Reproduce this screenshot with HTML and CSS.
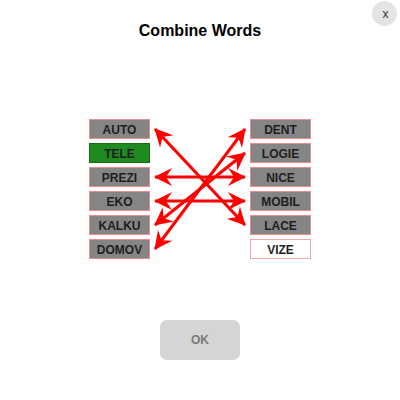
FILE: index.html
```html
<!DOCTYPE html>
<html>
<head>
<meta charset="utf-8">
<link rel="stylesheet" href="styles.css">
</head>
<body>
<div class="app">
  <header class="header">
    <h1 class="title">Combine Words</h1>
    <button class="close">x</button>
  </header>
  <div class="board">
    <div class="col">
      <div class="word">AUTO</div>
      <div class="word selected">TELE</div>
      <div class="word">PREZI</div>
      <div class="word">EKO</div>
      <div class="word">KALKU</div>
      <div class="word">DOMOV</div>
    </div>
    <svg class="links" width="100" height="140" viewBox="0 0 100 140">
      <defs>
        <marker id="ah" markerUnits="userSpaceOnUse" markerWidth="24" markerHeight="24" refX="0" refY="0" viewBox="-20 -12 24 24" orient="auto-start-reverse">
          <path d="M1,0 L-17,-9 L-11,0 L-17,9 Z" fill="#ff0000"/>
        </marker>
      </defs>
      <g stroke="#ff0000" stroke-width="3" marker-start="url(#ah)" marker-end="url(#ah)">
        <line x1="5" y1="10" x2="95" y2="106"/>
        <line x1="5" y1="58" x2="95" y2="58"/>
        <line x1="5" y1="82" x2="95" y2="82"/>
        <line x1="5" y1="106" x2="95" y2="34"/>
        <line x1="5" y1="130" x2="95" y2="10"/>
      </g>
    </svg>
    <div class="col">
      <div class="word">DENT</div>
      <div class="word">LOGIE</div>
      <div class="word">NICE</div>
      <div class="word">MOBIL</div>
      <div class="word">LACE</div>
      <div class="word empty">VIZE</div>
    </div>
  </div>
  <button class="ok">OK</button>
</div>
</body>
</html>
```
FILE: styles.css
```css
html, body {
  margin: 0;
  padding: 0;
  background: #ffffff;
}
body {
  font-family: "Liberation Sans", Arial, sans-serif;
}
.app {
  width: 400px;
  height: 400px;
  display: flex;
  flex-direction: column;
  align-items: center;
}
.header {
  width: 400px;
  display: grid;
  grid-template-columns: 1fr auto 1fr;
  align-items: start;
}
.title {
  grid-column: 2;
  margin: 22px 0 0 0;
  font-size: 16px;
  line-height: 18px;
  font-weight: bold;
  color: #000;
}
.close {
  grid-column: 3;
  justify-self: end;
  margin: 1px 3px 0 0;
  width: 25px;
  height: 25px;
  border-radius: 50%;
  border: none;
  background: #e4e4e4;
  color: #333;
  font-family: "Liberation Sans", Arial, sans-serif;
  font-size: 12px;
  line-height: 25px;
  padding: 2px 0 0 2px;
  display: flex;
  align-items: center;
  justify-content: center;
}
.board {
  margin-top: 79px;
  display: flex;
  flex-direction: row;
}
.col {
  display: flex;
  flex-direction: column;
  gap: 4px;
}
.links {
  display: block;
  overflow: visible;
}
.word {
  box-sizing: border-box;
  width: 61px;
  height: 20px;
  border: 1px solid #f08c8c;
  background: #858585;
  color: #1e1e1e;
  font-size: 12px;
  font-weight: bold;
  display: flex;
  align-items: center;
  justify-content: center;
  padding-top: 1px;
}
.word.selected {
  background: #1f8b1f;
  border-color: #176b17;
}
.word.empty {
  background: #ffffff;
  border-color: #f4a8a8;
}
.ok {
  margin-top: 61px;
  width: 80px;
  height: 40px;
  border: none;
  border-radius: 7px;
  background: #d5d5d5;
  color: #7a7a7a;
  font-family: "Liberation Sans", Arial, sans-serif;
  font-size: 12px;
  font-weight: bold;
}
```
